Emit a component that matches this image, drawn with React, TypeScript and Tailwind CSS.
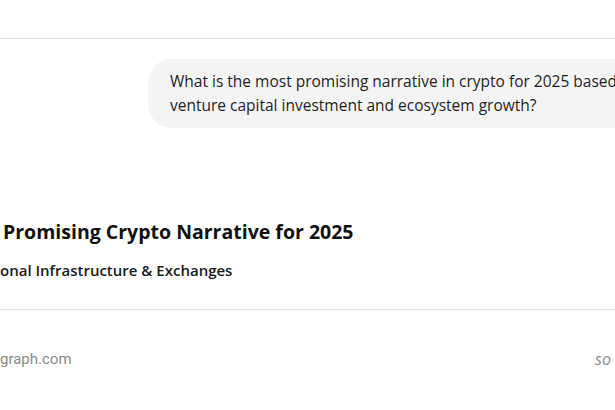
import React from 'react';

const App: React.FC = () => {
  return (
    <div className="w-[615px] h-[410px] overflow-hidden bg-white font-['Open_Sans',sans-serif] text-[#1f1f1f]">
      {/* top bar */}
      <div className="h-[39px] border-b border-[#dde4e8]" />

      {/* user message */}
      <div className="flex pl-[148px] mt-[20px]">
        <div className="w-[520px] shrink-0 bg-[#f4f4f4] rounded-l-[24px] pl-[22px] pt-[10px] pb-[11px] text-[15.5px] leading-[24px] whitespace-nowrap">
          <div>What is the most promising narrative in crypto for 2025 based</div>
          <div>venture capital investment and ecosystem growth?</div>
        </div>
      </div>

      {/* answer */}
      <div className="mt-[90px] pl-[3px]">
        <h2 className="text-[19.5px] font-bold leading-[28px] text-[#111]">
          Promising Crypto Narrative for 2025
        </h2>
      </div>
      <p className="mt-[13px] text-[15px] font-semibold leading-[22px] text-[#1a1a1a]">
        onal Infrastructure &amp; Exchanges
      </p>

      <div className="mt-[28px] border-t border-[#dde4e8]" />

      {/* footer */}
      <div className="flex justify-between items-center mt-[39px] pr-[4px] text-[15px] leading-[20px] text-[#8a8a8a]">
        <span className="font-['Roboto',sans-serif]">graph.com</span>
        <span className="italic text-[16px]">so</span>
      </div>
    </div>
  );
};

export default App;
